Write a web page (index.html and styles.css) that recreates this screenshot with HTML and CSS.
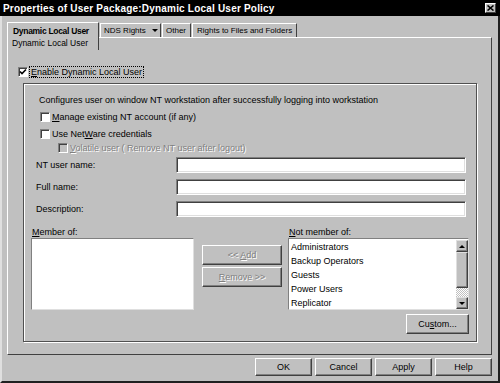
FILE: index.html
```html
<!DOCTYPE html>
<html lang="en">
<head>
    <meta charset="UTF-8">
    <title>Properties of User Package:Dynamic Local User Policy</title>
    <link rel="stylesheet" href="styles.css">
</head>
<body>
<div class="window">
    <!-- Title bar -->
    <div class="titlebar">
        <span class="title">Properties of User Package:Dynamic Local User Policy</span>
        <span class="close">
            <svg width="7" height="6" viewBox="0 0 7 6"><path d="M0.5 0.5 L6.5 5.5 M6.5 0.5 L0.5 5.5" stroke="#000" stroke-width="1.6"/></svg>
        </span>
    </div>

    <div class="frame">
        <!-- Tabs -->
        <div class="tabs">
            <div class="tab-main">
                <div class="tab-name">Dynamic Local User</div>
                <div class="tab-sub">Dynamic Local User</div>
            </div>
            <div class="tab-rest">
                <div class="tab-row">
                    <div class="tab tab-nds">NDS Rights<span class="arrow"></span></div>
                    <div class="tab tab-other">Other</div>
                    <div class="tab tab-rights">Rights to Files and Folders</div>
                </div>
                <div class="tab-edge"></div>
            </div>
        </div>

        <!-- Tab page -->
        <div class="panel">
            <div class="enable">
                <span class="check checked">
                    <svg width="8" height="8" viewBox="0 0 8 8"><path d="M1 3.5 L3 5.5 L7 1.5" fill="none" stroke="#000" stroke-width="1.6"/></svg>
                </span>
                <span class="focus"><u>E</u>nable Dynamic Local User</span>
            </div>

            <div class="group">
                <p class="note">Configures user on window NT workstation after successfully logging into workstation</p>
                <div class="option opt-first"><span class="check"></span><span><u>M</u>anage existing NT account (if any)</span></div>
                <div class="option opt-second"><span class="check"></span><span>Use Net<u>W</u>are credentials</span></div>
                <div class="option opt-sub disabled"><span class="check"></span><span><u>V</u>olatile user ( Remove NT user after logout)</span></div>

                <div class="fields">
                    <span class="field-label">NT user name:</span><span class="input"></span>
                    <span class="field-label">Full name:</span><span class="input"></span>
                    <span class="field-label">Description:</span><span class="input"></span>
                </div>

                <div class="members">
                    <div class="list-col col-member">
                        <div class="list-label"><u>M</u>ember of:</div>
                        <div class="listbox"></div>
                    </div>
                    <div class="move">
                        <button class="btn" disabled>&lt;&lt; <u>A</u>dd</button>
                        <button class="btn" disabled><u>R</u>emove &gt;&gt;</button>
                    </div>
                    <div class="list-col col-other">
                        <div class="list-label"><u>N</u>ot member of:</div>
                        <div class="listbox">
                            <ul class="items">
                                <li>Administrators</li>
                                <li>Backup Operators</li>
                                <li>Guests</li>
                                <li>Power Users</li>
                                <li>Replicator</li>
                            </ul>
                            <div class="scrollbar">
                                <span class="sb-btn"><span class="tri-up"></span></span>
                                <span class="sb-thumb"></span>
                                <span class="sb-track"></span>
                                <span class="sb-btn"><span class="tri-down"></span></span>
                            </div>
                        </div>
                        <button class="btn custom">Cu<u>s</u>tom...</button>
                    </div>
                </div>
            </div>
        </div>

        <!-- Dialog buttons -->
        <div class="actions">
            <button class="btn">OK</button>
            <button class="btn">Cancel</button>
            <button class="btn">Apply</button>
            <button class="btn">Help</button>
        </div>
    </div>
</div>
</body>
</html>
```

FILE: styles.css
```css
/* General reset */
* {
    margin: 0;
    padding: 0;
    box-sizing: border-box;
}

body {
    font-family: "Liberation Sans", Arial, sans-serif;
    font-size: 9px;
    color: #000;
    background: #c0c0c0;
}

u {
    text-decoration: underline;
}

.window {
    width: 500px;
    height: 383px;
    display: flex;
    flex-direction: column;
    background: #c0c0c0;
}

/* Title bar */
.titlebar {
    height: 16px;
    background: #000;
    color: #fff;
    display: flex;
    align-items: center;
    justify-content: space-between;
    padding: 0 4px 0 3px;
}

.title {
    font-weight: bold;
    font-size: 10px;
    letter-spacing: 0.2px;
}

.close {
    width: 11px;
    height: 10px;
    background: #c0c0c0;
    border: 1px solid;
    border-color: #fff #404040 #404040 #fff;
    display: flex;
    align-items: center;
    justify-content: center;
}

.frame {
    flex: 1;
    display: flex;
    flex-direction: column;
    padding: 6px 6px 5px 5px;
    border-left: 2px solid #dfdfdf;
    border-right: 2px solid #202020;
    border-bottom: 2px solid #202020;
}

/* Tabs */
.tabs {
    display: flex;
    height: 28px;
    font-size: 8px;
}

.tab-main {
    width: 92px;
    border-left: 1px solid #fff;
    border-top: 1px solid #fff;
    border-right: 1px solid #404040;
    padding: 2px 0 0 5px;
    line-height: 12px;
    white-space: nowrap;
}

.tab-name {
    font-weight: bold;
    font-size: 8.5px;
    letter-spacing: -0.3px;
}

.tab-sub {
    margin-left: -1px;
    font-size: 8.5px;
}

.tab-rest {
    flex: 1;
    display: flex;
    flex-direction: column;
}

.tab-row {
    height: 15px;
    display: flex;
    align-items: flex-end;
}

.tab {
    height: 14px;
    margin-left: 1px;
    padding: 1px 0 0 3px;
    line-height: 12px;
    border-left: 1px solid #fff;
    border-top: 1px solid #fff;
    border-right: 1px solid #404040;
    white-space: nowrap;
}

.tab-nds { width: 61px; }
.tab-other { width: 29px; }
.tab-rights { width: 105px; padding-left: 4px; }

.arrow {
    display: inline-block;
    margin: 0 0 1px 6px;
    border-left: 3px solid transparent;
    border-right: 3px solid transparent;
    border-top: 3px solid #000;
}

.tab-edge {
    flex: 1;
    border-top: 1px solid #fff;
    border-right: 1px solid #404040;
}

/* Tab page */
.panel {
    height: 305px;
    padding: 16px 0 12px 0;
    border-left: 1px solid #fff;
    border-right: 1px solid #404040;
    border-bottom: 1px solid #404040;
}

.check {
    width: 10px;
    height: 10px;
    flex: none;
    background: #fff;
    border: 1px solid;
    border-color: #808080 #fff #fff #808080;
    box-shadow: inset 1px 1px #404040;
    display: flex;
    align-items: center;
    justify-content: center;
}

.enable {
    display: flex;
    align-items: center;
    height: 12px;
    margin-left: 10px;
    gap: 1px;
}

.focus {
    border: 1px dotted #000;
    padding: 0 1px;
    line-height: 10px;
}

/* Group box */
.group {
    width: 454px;
    height: 259px;
    margin: 5px 0 0 15px;
    border: 1px solid #505050;
    box-shadow: inset 1px 1px #fff, 1px 1px #fff;
}

.note {
    margin: 11px 0 0 15px;
    line-height: 11px;
}

.option {
    display: flex;
    align-items: center;
    gap: 2px;
    height: 12px;
    margin-left: 16px;
}

.opt-first { margin-top: 5px; }
.opt-second { margin-top: 5px; }

.opt-sub {
    margin-top: 2px;
    margin-left: 34px;
}

.disabled {
    color: #808080;
    text-shadow: 1px 1px #fff;
}

.disabled .check {
    background: #c0c0c0;
}

.fields {
    display: grid;
    grid-template-columns: 140px 290px;
    grid-auto-rows: 16px;
    row-gap: 6px;
    margin: 3px 0 0 12px;
}

.field-label {
    line-height: 16px;
}

.input {
    background: #fff;
    border: 1px solid;
    border-color: #808080 #fff #fff #808080;
    box-shadow: inset 1px 1px #404040, inset -1px -1px #dfdfdf;
}

/* Member lists */
.members {
    display: flex;
    margin: 9px 0 0 7px;
}

.list-col {
    display: flex;
    flex-direction: column;
}

.col-member { width: 163px; }

.col-other {
    width: 181px;
    margin-left: 6px;
}

.list-label {
    line-height: 12px;
    padding-left: 1px;
}

.listbox {
    height: 72px;
    background: #fff;
    border: 1px solid;
    border-color: #808080 #dfdfdf #dfdfdf #808080;
    display: flex;
}

.items {
    flex: 1;
    list-style: none;
    padding: 1px 0 0 2px;
    line-height: 14px;
}

.scrollbar {
    width: 12px;
    display: flex;
    flex-direction: column;
    padding-top: 1px;
}

.sb-btn,
.sb-thumb {
    background: #c0c0c0;
    border: 1px solid;
    border-color: #dfdfdf #404040 #404040 #dfdfdf;
    box-shadow: inset -1px -1px #808080;
    display: flex;
    align-items: center;
    justify-content: center;
}

.sb-btn { height: 12px; }
.sb-thumb { height: 36px; }

.sb-track {
    flex: 1;
    background: repeating-conic-gradient(#fff 0 25%, #c0c0c0 0 50%) 0 0 / 2px 2px;
}

.tri-up {
    border-left: 3px solid transparent;
    border-right: 3px solid transparent;
    border-bottom: 3px solid #000;
}

.tri-down {
    border-left: 3px solid transparent;
    border-right: 3px solid transparent;
    border-top: 3px solid #000;
}

.move {
    width: 80px;
    margin-left: 8px;
    padding-top: 19px;
    display: flex;
    flex-direction: column;
    gap: 2px;
}

/* Buttons */
.btn {
    font: inherit;
    color: #000;
    background: #c0c0c0;
    border: 1px solid;
    border-color: #fff #404040 #404040 #fff;
    box-shadow: inset -1px -1px #808080;
    height: 20px;
}

.btn:disabled {
    color: #808080;
    text-shadow: 1px 1px #fff;
}

.custom {
    align-self: flex-end;
    width: 63px;
    margin-top: 4px;
}

.actions {
    display: flex;
    justify-content: flex-end;
    gap: 3px;
    margin-top: 3px;
}

.actions .btn {
    width: 57px;
    height: 18px;
}
```
